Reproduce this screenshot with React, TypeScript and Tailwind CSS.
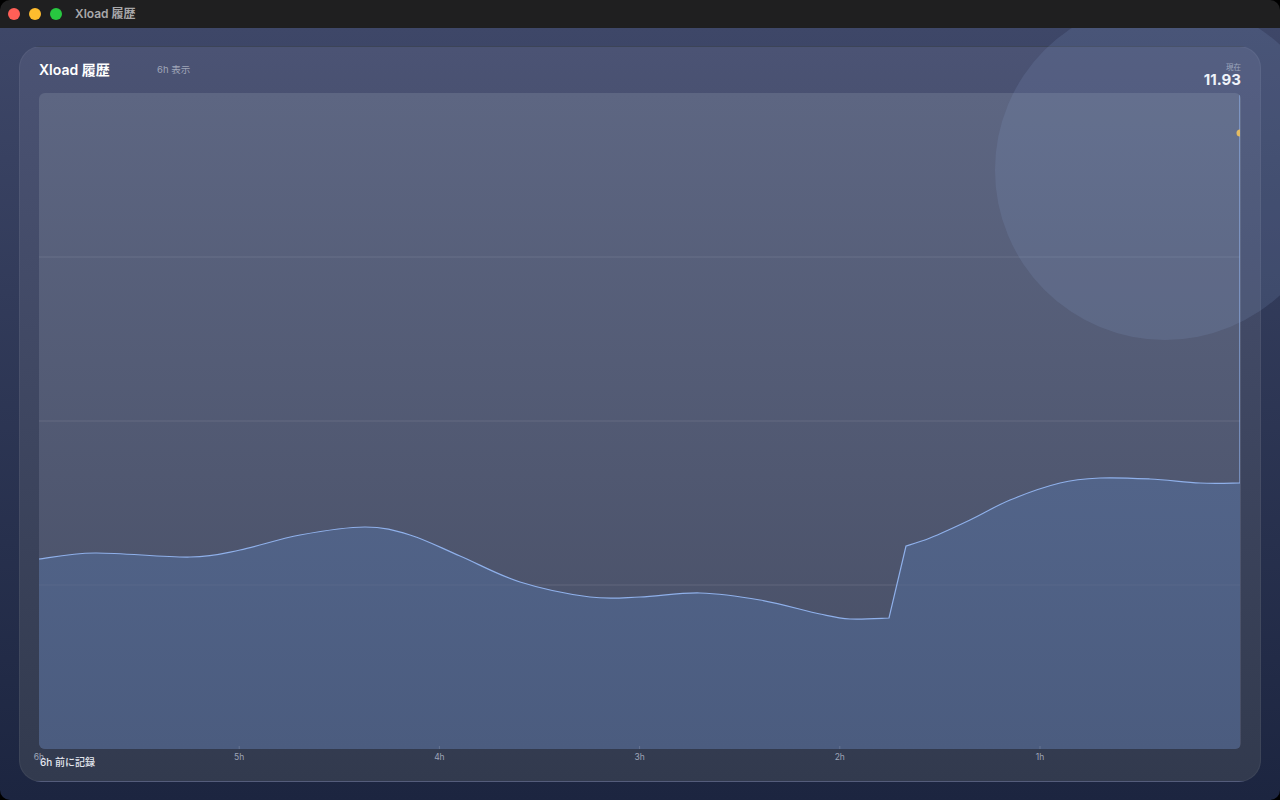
import React from 'react';

// chart area is 1201 x 656, points are in that space
const W = 1201;
const H = 656;

const left: [number, number][] = [
  [0, 466], [56, 460], [151, 464], [201, 457], [261, 442], [326, 434], [371, 442],
  [421, 463], [481, 489], [551, 504], [601, 504], [661, 500], [721, 507], [781, 521],
  [811, 526], [850, 525],
];
const right: [number, number][] = [
  [867, 453], [891, 445], [931, 427], [971, 407], [1021, 390], [1061, 385],
  [1111, 386], [1161, 390], [1201, 390],
];

const smooth = (pts: [number, number][]) => {
  let d = '';
  for (let i = 0; i < pts.length - 1; i++) {
    const p0 = pts[i - 1] || pts[i];
    const p1 = pts[i];
    const p2 = pts[i + 1];
    const p3 = pts[i + 2] || p2;
    const c1x = p1[0] + (p2[0] - p0[0]) / 6;
    const c1y = p1[1] + (p2[1] - p0[1]) / 6;
    const c2x = p2[0] - (p3[0] - p1[0]) / 6;
    const c2y = p2[1] - (p3[1] - p1[1]) / 6;
    d += ` C${c1x.toFixed(1)},${c1y.toFixed(1)} ${c2x.toFixed(1)},${c2y.toFixed(1)} ${p2[0]},${p2[1]}`;
  }
  return d;
};

const linePath =
  `M${left[0][0]},${left[0][1]}` + smooth(left) +
  ` L${right[0][0]},${right[0][1]}` + smooth(right) +
  ` L${W},2`;

const areaPath =
  `M0,${H} L${left[0][0]},${left[0][1]}` + smooth(left) +
  ` L${right[0][0]},${right[0][1]}` + smooth(right) +
  ` L${W},${H} Z`;

const ticks = ['6h', '5h', '4h', '3h', '2h', '1h'];

export default function App() {
  return (
    <div
      className="w-[1280px] h-[800px] bg-black overflow-hidden"
      style={{ fontFamily: 'Inter, "Noto Sans CJK JP", sans-serif' }}
    >
      <div className="w-full h-full rounded-[10px] overflow-hidden flex flex-col relative">
        {/* タイトルバー */}
        <div className="h-[28px] shrink-0 bg-[#1f1f20] flex items-center px-[8px] relative z-20">
          <div className="flex items-center gap-[9px]">
            <span className="w-[12px] h-[12px] rounded-full bg-[#ff5f57]" />
            <span className="w-[12px] h-[12px] rounded-full bg-[#febc2e]" />
            <span className="w-[12px] h-[12px] rounded-full bg-[#28c840]" />
          </div>
          <span className="ml-[13px] text-[12px] font-semibold text-[#a8a8aa]">Xload 履歴</span>
        </div>

        {/* 本体 */}
        <div className="flex-1 relative bg-gradient-to-b from-[#3e4768] to-[#1c2540] px-[19px] pt-[18px] pb-[18px] flex">
          <div className="flex-1 rounded-[22px] bg-gradient-to-b from-[#4b5374] to-[#323a4e] border border-white/5 flex flex-col px-[19px] pt-[14px] pb-[11px]">
            {/* ヘッダー */}
            <div className="flex items-start justify-between h-[32px]">
              <div className="flex items-center">
                <span className="text-[14px] leading-[18px] font-semibold text-white w-[118px]">Xload 履歴</span>
                <span className="text-[9.5px] leading-[18px] text-[#a0a6b8]">6h 表示</span>
              </div>
              <div className="flex flex-col items-end leading-none mt-[3px]">
                <span className="text-[7.5px] text-[#a0a6b8]">現在</span>
                <span className="text-[15px] font-bold text-white">11.93</span>
              </div>
            </div>

            {/* チャート */}
            <div className="relative h-[656px] rounded-[6px] overflow-hidden bg-gradient-to-b from-[#5d6682] to-[#474e65]">
              <svg width={W} height={H} viewBox={`0 0 ${W} ${H}`} className="block">
                <defs>
                  <linearGradient id="fill" x1="0" y1="0" x2="0" y2="1">
                    <stop offset="0" stopColor="#526489" />
                    <stop offset="1" stopColor="#4b5c7f" />
                  </linearGradient>
                </defs>
                {[164, 328, 492].map((y) => (
                  <line key={y} x1={0} x2={W} y1={y} y2={y} stroke="rgba(255,255,255,0.07)" strokeWidth={1} />
                ))}
                <path d={areaPath} fill="url(#fill)" />
                {[164, 328, 492].map((y) => (
                  <line key={'f' + y} x1={0} x2={W} y1={y} y2={y} stroke="rgba(255,255,255,0.05)" strokeWidth={1} />
                ))}
                <path d={linePath} fill="none" stroke="#8fb0ea" strokeWidth={1.2} />
                {ticks.map((t, i) => (
                  <line key={t} x1={i * 200.2} x2={i * 200.2} y1={H - 3} y2={H} stroke="rgba(255,255,255,0.15)" />
                ))}
                <circle cx={W} cy={40} r={3.5} fill="#f3bf4f" />
              </svg>
            </div>

            {/* 軸ラベル */}
            <div className="relative h-[20px]">
              {ticks.map((t, i) => (
                <span
                  key={t}
                  className="absolute top-[2px] -translate-x-1/2 text-[8.5px] leading-[12px] text-[#9ea5b8]"
                  style={{ left: i * 200.2 }}
                >
                  {t}
                </span>
              ))}
              <span className="absolute left-[1px] top-[6px] text-[10px] leading-[14px] font-medium text-[#e4e7ef]">6h 前に記録</span>
            </div>
          </div>

          {/* 装飾の円 */}
          <div className="absolute left-[995px] -top-[28px] w-[340px] h-[340px] rounded-full bg-[#8ea6d8]/15 pointer-events-none" />
        </div>
      </div>
    </div>
  );
}
